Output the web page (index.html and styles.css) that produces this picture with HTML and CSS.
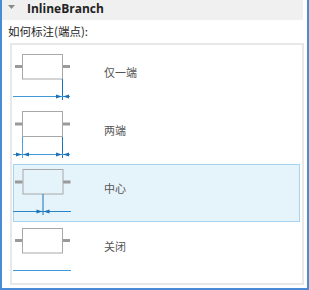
FILE: index.html
```html
<!DOCTYPE html>
<html>
<head>
<meta charset="utf-8">
<link rel="stylesheet" href="styles.css">
</head>
<body>
<div class="frame">
  <div class="header">
    <svg class="caret" width="8" height="5" viewBox="0 0 8 5"><polygon points="0,0 7,0 3.5,4" fill="#8a8a8a"/></svg>
    <span class="title">InlineBranch</span>
  </div>
  <div class="label">如何标注(端点):</div>
  <div class="list">
    <div class="item">
      <svg class="icon" width="60" height="58" viewBox="0 0 60 58">
        <rect x="2" y="17" width="7.5" height="3" fill="#9a9a9a"/>
        <rect x="49.5" y="17" width="7.5" height="3" fill="#9a9a9a"/>
        <rect x="9.5" y="6.5" width="40" height="24.5" fill="#fff" stroke="#a8a8a8" stroke-width="1"/>
        <line x1="49.5" y1="31" x2="49.5" y2="52" stroke="#1a72b8" stroke-width="1"/>
        <line x1="0" y1="48.5" x2="57" y2="48.5" stroke="#3f9ad6" stroke-width="1"/>
        <polygon points="43,46.5 49,48.5 43,50.5" fill="#1a72b8"/>
        <polygon points="56,46.5 50,48.5 56,50.5" fill="#1a72b8"/>
      </svg>
      <span class="text">仅一端</span>
    </div>
    <div class="item">
      <svg class="icon" width="60" height="58" viewBox="0 0 60 58">
        <rect x="2" y="16.5" width="7.5" height="3" fill="#9a9a9a"/>
        <rect x="49.5" y="16.5" width="7.5" height="3" fill="#9a9a9a"/>
        <rect x="9.5" y="5.5" width="40" height="25" fill="#fff" stroke="#a8a8a8" stroke-width="1"/>
        <line x1="9.5" y1="31" x2="9.5" y2="52" stroke="#4ba3dc" stroke-width="1"/>
        <line x1="49.5" y1="31" x2="49.5" y2="52" stroke="#1a72b8" stroke-width="1"/>
        <line x1="0" y1="48.5" x2="57" y2="48.5" stroke="#3f9ad6" stroke-width="1"/>
        <polygon points="3,46.5 9,48.5 3,50.5" fill="#1a72b8"/>
        <polygon points="16,46.5 10,48.5 16,50.5" fill="#1a72b8"/>
        <polygon points="43,46.5 49,48.5 43,50.5" fill="#1a72b8"/>
        <polygon points="56,46.5 50,48.5 56,50.5" fill="#1a72b8"/>
      </svg>
      <span class="text">两端</span>
    </div>
    <div class="item selected">
      <svg class="icon" width="60" height="58" viewBox="0 0 60 58">
        <rect x="2" y="16.5" width="7.5" height="3" fill="#9a9a9a"/>
        <rect x="50" y="16.5" width="7.5" height="3" fill="#9a9a9a"/>
        <rect x="10" y="5.5" width="40" height="24.5" fill="#e5f3fb" stroke="#a8a8a8" stroke-width="1"/>
        <line x1="30" y1="30" x2="30" y2="51" stroke="#1a72b8" stroke-width="1"/>
        <line x1="0" y1="47.5" x2="58" y2="47.5" stroke="#2a85c6" stroke-width="1"/>
        <polygon points="23.5,45.5 29.5,47.5 23.5,49.5" fill="#1a72b8"/>
        <polygon points="36.5,45.5 30.5,47.5 36.5,49.5" fill="#1a72b8"/>
      </svg>
      <span class="text">中心</span>
    </div>
    <div class="item">
      <svg class="icon" width="60" height="58" viewBox="0 0 60 58">
        <rect x="2" y="17" width="7.5" height="3" fill="#9a9a9a"/>
        <rect x="49.5" y="17" width="7.5" height="3" fill="#9a9a9a"/>
        <rect x="9.5" y="6.5" width="40" height="24.5" fill="#fff" stroke="#a8a8a8" stroke-width="1"/>
        <line x1="0" y1="48.5" x2="58" y2="48.5" stroke="#3f9ad6" stroke-width="1.2"/>
      </svg>
      <span class="text">关闭</span>
    </div>
  </div>
</div>
</body>
</html>
```

FILE: styles.css
```css
html, body {
  margin: 0;
  padding: 0;
  background: #fff;
}
body {
  font-family: "Noto Sans CJK SC", "Open Sans", sans-serif;
}
.frame {
  width: 305px;
  height: 288px;
  border-left: 2px solid #4a8bd6;
  border-right: 2px solid #4a8bd6;
  border-bottom: 2px solid #4a8bd6;
  background: #fff;
  display: flex;
  flex-direction: column;
}
.header {
  width: 301px;
  height: 20px;
  background: #f0f0f0;
  display: flex;
  align-items: center;
  box-sizing: border-box;
  padding-bottom: 2px;
}
.caret {
  margin-left: 6px;
  margin-right: 11px;
  margin-top: -3px;
}
.title {
  font-family: "Open Sans", "Liberation Sans", sans-serif;
  font-weight: bold;
  font-size: 12px;
  color: #222;
  line-height: 14px;
}
.label {
  height: 23px;
  box-sizing: border-box;
  padding-left: 6px;
  padding-top: 3px;
  font-size: 11.5px;
  line-height: 16px;
  color: #1e1e1e;
}
.list {
  margin-left: 8px;
  width: 294px;
  height: 242px;
  box-sizing: border-box;
  border: 2px solid #e8e8e8;
  padding: 3px 2px 3px 1px;
  display: flex;
  flex-direction: column;
}
.item {
  height: 58px;
  box-sizing: border-box;
  border: 1px solid transparent;
  display: flex;
  align-items: center;
}
.item.selected {
  background: #e5f3fb;
  border-color: #a6d3f0;
}
.icon {
  display: block;
  margin-left: -1px;
  flex: none;
}
.text {
  margin-left: 31px;
  padding-bottom: 10px;
  font-size: 11px;
  line-height: 14px;
  color: #555;
}
```
